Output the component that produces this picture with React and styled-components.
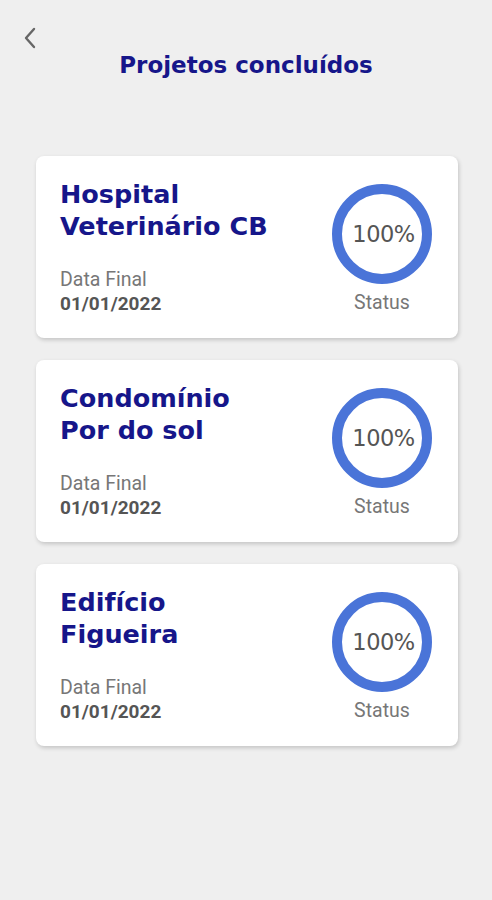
import React from "react";
import styled, { createGlobalStyle } from "styled-components";

const Global = createGlobalStyle`
  html, body { margin: 0; padding: 0; background: #efefef; }
  body { font-family: Roboto, "Liberation Sans", sans-serif; }
`;

const Page = styled.div`
  width: 492px;
  min-height: 900px;
  background: #efefef;
  box-sizing: border-box;
  padding-top: 24px;
`;

const Header = styled.header`
  position: relative;
  height: 60px;
  display: flex;
  align-items: center;
  justify-content: center;
`;

const BackButton = styled.button`
  position: absolute;
  left: 16px;
  top: 0;
  width: 28px;
  height: 28px;
  padding: 0;
  border: none;
  background: transparent;
  display: flex;
  align-items: center;
  justify-content: center;
  color: #666;
`;

const Title = styled.h1`
  margin: 0;
  margin-top: 22px;
  font-family: "DejaVu Sans", sans-serif;
  font-weight: 700;
  font-size: 23px;
  color: #16168a;
  letter-spacing: 0;
`;

const List = styled.main`
  margin-top: 72px;
  padding: 0 34px 0 36px;
  display: flex;
  flex-direction: column;
  gap: 22px;
`;

const Card = styled.section`
  height: 182px;
  box-sizing: border-box;
  background: #fff;
  border-radius: 8px;
  box-shadow: 1px 2px 4px rgba(0, 0, 0, 0.18);
  display: flex;
  justify-content: space-between;
  padding: 22px 26px 22px 24px;
`;

const Info = styled.div`
  display: flex;
  flex-direction: column;
  justify-content: space-between;
`;

const Name = styled.h2`
  margin: 0;
  font-family: "DejaVu Sans", sans-serif;
  font-weight: 700;
  font-size: 25.5px;
  line-height: 32px;
  color: #16168a;
  white-space: pre-line;
`;

const DateBlock = styled.div`
  display: flex;
  flex-direction: column;
`;

const Label = styled.span`
  font-size: 19.5px;
  line-height: 24px;
  color: #777;
`;

const DateValue = styled.span`
  font-size: 19px;
  line-height: 24px;
  font-weight: 700;
  color: #555;
`;

const StatusCol = styled.div`
  display: flex;
  flex-direction: column;
  align-items: center;
  justify-content: flex-end;
  gap: 7px;
  padding-bottom: 1px;
`;

const Ring = styled.div`
  width: 100px;
  height: 100px;
  box-sizing: border-box;
  border-radius: 50%;
  border: 10px solid #4a74d8;
  display: flex;
  align-items: center;
  justify-content: center;
  font-family: "DejaVu Sans", sans-serif;
  font-size: 22.5px;
  letter-spacing: -0.5px;
  color: #555;
  padding-left: 3px;
`;

const StatusLabel = styled.span`
  font-size: 19.5px;
  line-height: 24px;
  color: #777;
`;

const projects = [
  { name: "Hospital\nVeterinário CB", date: "01/01/2022", pct: 100 },
  { name: "Condomínio\nPor do sol", date: "01/01/2022", pct: 100 },
  { name: "Edifício\nFigueira", date: "01/01/2022", pct: 100 },
];

export default function App() {
  return (
    <Page>
      <Global />
      <Header>
        <BackButton aria-label="Voltar">
          <svg width="16" height="24" viewBox="0 0 16 24" fill="none">
            <path d="M12 3 L4 12 L12 21" stroke="#666" strokeWidth="2.4" strokeLinecap="round" strokeLinejoin="round" />
          </svg>
        </BackButton>
        <Title>Projetos concluídos</Title>
      </Header>
      <List>
        {projects.map((p) => (
          <Card key={p.name}>
            <Info>
              <Name>{p.name}</Name>
              <DateBlock>
                <Label>Data Final</Label>
                <DateValue>{p.date}</DateValue>
              </DateBlock>
            </Info>
            <StatusCol>
              <Ring>{p.pct}%</Ring>
              <StatusLabel>Status</StatusLabel>
            </StatusCol>
          </Card>
        ))}
      </List>
    </Page>
  );
}
